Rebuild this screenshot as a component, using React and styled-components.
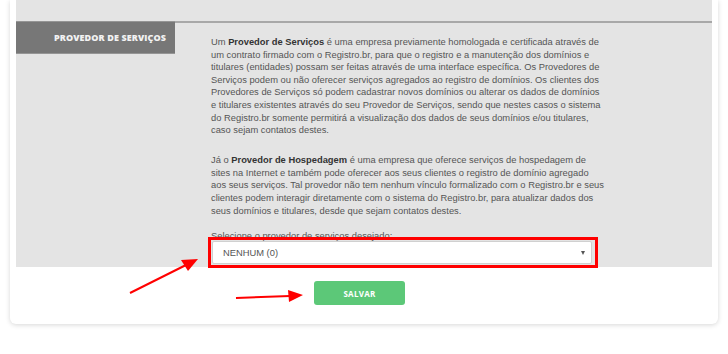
import React from "react";
import styled, { createGlobalStyle } from "styled-components";

const Global = createGlobalStyle`
  html, body { margin: 0; padding: 0; background: #ffffff; }
  body { font-family: "Liberation Sans", Arial, sans-serif; }
  * { box-sizing: border-box; }
`;

const Page = styled.div`
  position: relative;
  width: 728px;
  height: 354px;
  overflow: hidden;
  background: #ffffff;
`;

const Card = styled.div`
  margin-left: 10px;
  width: 708px;
  background: #ffffff;
  border-radius: 0 0 6px 6px;
  box-shadow: 0 1px 5px rgba(0, 0, 0, 0.16);
  padding: 0 6px;
`;

const GreyPanel = styled.div`
  background: #e4e4e4;
  padding-top: 21px;
`;

const Row = styled.div`
  display: flex;
  align-items: flex-start;
`;

const Label = styled.div`
  flex: 0 0 159px;
  height: 33px;
  background: #777777;
  border-top: 1px solid #959595;
  border-bottom: 1px solid #959595;
  display: flex;
  align-items: center;
  justify-content: flex-end;
  padding: 0 9px 1px 0;
  color: #f2f2f2;
  font-family: "Open Sans", sans-serif;
  font-weight: 800;
  font-size: 9px;
  letter-spacing: 0.1px;
`;

const Content = styled.div`
  flex: 1;
  border-top: 2px solid #a8a8a8;
  padding: 13px 0 0 36px;
`;

const Paragraph = styled.p`
  margin: 0 0 ${(p) => p.$gap || 0}px;
  color: #555555;
  font-size: 9.35px;
  line-height: 12.6px;
  white-space: nowrap;
  b { color: #333333; }
`;

const FieldLabel = styled.div`
  color: #555555;
  font-size: 9.35px;
  line-height: 12px;
  height: 9px;
  overflow: visible;
`;

const SelectWrap = styled.div`
  position: relative;
  width: 380px;
  margin: 2px 0 0 1px;
  padding-bottom: 3px;
`;

const Select = styled.div`
  height: 23px;
  background: #ffffff;
  border: 1px solid #d0d0d0;
  border-radius: 2px;
  display: flex;
  align-items: center;
  justify-content: space-between;
  padding: 0 6px 0 10px;
  color: #555555;
  font-size: 9.35px;
`;

const Caret = styled.span`
  width: 0;
  height: 0;
  border-left: 2.5px solid transparent;
  border-right: 2.5px solid transparent;
  border-top: 4px solid #555555;
`;

const Highlight = styled.div`
  position: absolute;
  left: -4px;
  top: -4px;
  width: 390px;
  height: 31px;
  border: 3px solid #ff0000;
  pointer-events: none;
`;

const Footer = styled.div`
  height: 57px;
  padding: 14px 0 0 298px;
`;

const Button = styled.button`
  width: 91px;
  height: 24px;
  border: none;
  border-radius: 3px;
  background: #5cc878;
  color: #ffffff;
  font-family: "Open Sans", sans-serif;
  font-weight: 700;
  font-size: 8px;
  letter-spacing: 0.3px;
  cursor: pointer;
`;

const Arrows = styled.svg`
  position: absolute;
  left: 0;
  top: 0;
  pointer-events: none;
`;

export default function App() {
  return (
    <>
      <Global />
      <Page>
        <Card>
          <GreyPanel>
            <Row>
              <Label>PROVEDOR DE SERVIÇOS</Label>
              <Content>
                <Paragraph $gap={17.4}>
                  Um <b>Provedor de Serviços</b> é uma empresa previamente homologada e certificada através de<br />
                  um contrato firmado com o Registro.br, para que o registro e a manutenção dos domínios e<br />
                  titulares (entidades) possam ser feitas através de uma interface específica. Os Provedores de<br />
                  Serviços podem ou não oferecer serviços agregados ao registro de domínios. Os clientes dos<br />
                  Provedores de Serviços só podem cadastrar novos domínios ou alterar os dados de domínios<br />
                  e titulares existentes através do seu Provedor de Serviços, sendo que nestes casos o sistema<br />
                  do Registro.br somente permitirá a visualização dos dados de seus domínios e/ou titulares,<br />
                  caso sejam contatos destes.
                </Paragraph>
                <Paragraph $gap={13}>
                  Já o <b>Provedor de Hospedagem</b> é uma empresa que oferece serviços de hospedagem de<br />
                  sites na Internet e também pode oferecer aos seus clientes o registro de domínio agregado<br />
                  aos seus serviços. Tal provedor não tem nenhum vínculo formalizado com o Registro.br e seus<br />
                  clientes podem interagir diretamente com o sistema do Registro.br, para atualizar dados dos<br />
                  seus domínios e titulares, desde que sejam contatos destes.
                </Paragraph>
                <FieldLabel>Selecione o provedor de serviços desejado:</FieldLabel>
                <SelectWrap>
                  <Select>
                    <span>NENHUM (0)</span>
                    <Caret />
                  </Select>
                  <Highlight />
                </SelectWrap>
              </Content>
            </Row>
          </GreyPanel>
          <Footer>
            <Button>SALVAR</Button>
          </Footer>
        </Card>
        <Arrows width="728" height="354" viewBox="0 0 728 354">
          <line x1="130" y1="293" x2="186" y2="265" stroke="#ff0000" strokeWidth="2" />
          <polygon points="198,259 181,260 188,271" fill="#ff0000" />
          <line x1="236" y1="298" x2="290" y2="296" stroke="#ff0000" strokeWidth="2" />
          <polygon points="303,295 288,290 289,302" fill="#ff0000" />
        </Arrows>
      </Page>
    </>
  );
}
